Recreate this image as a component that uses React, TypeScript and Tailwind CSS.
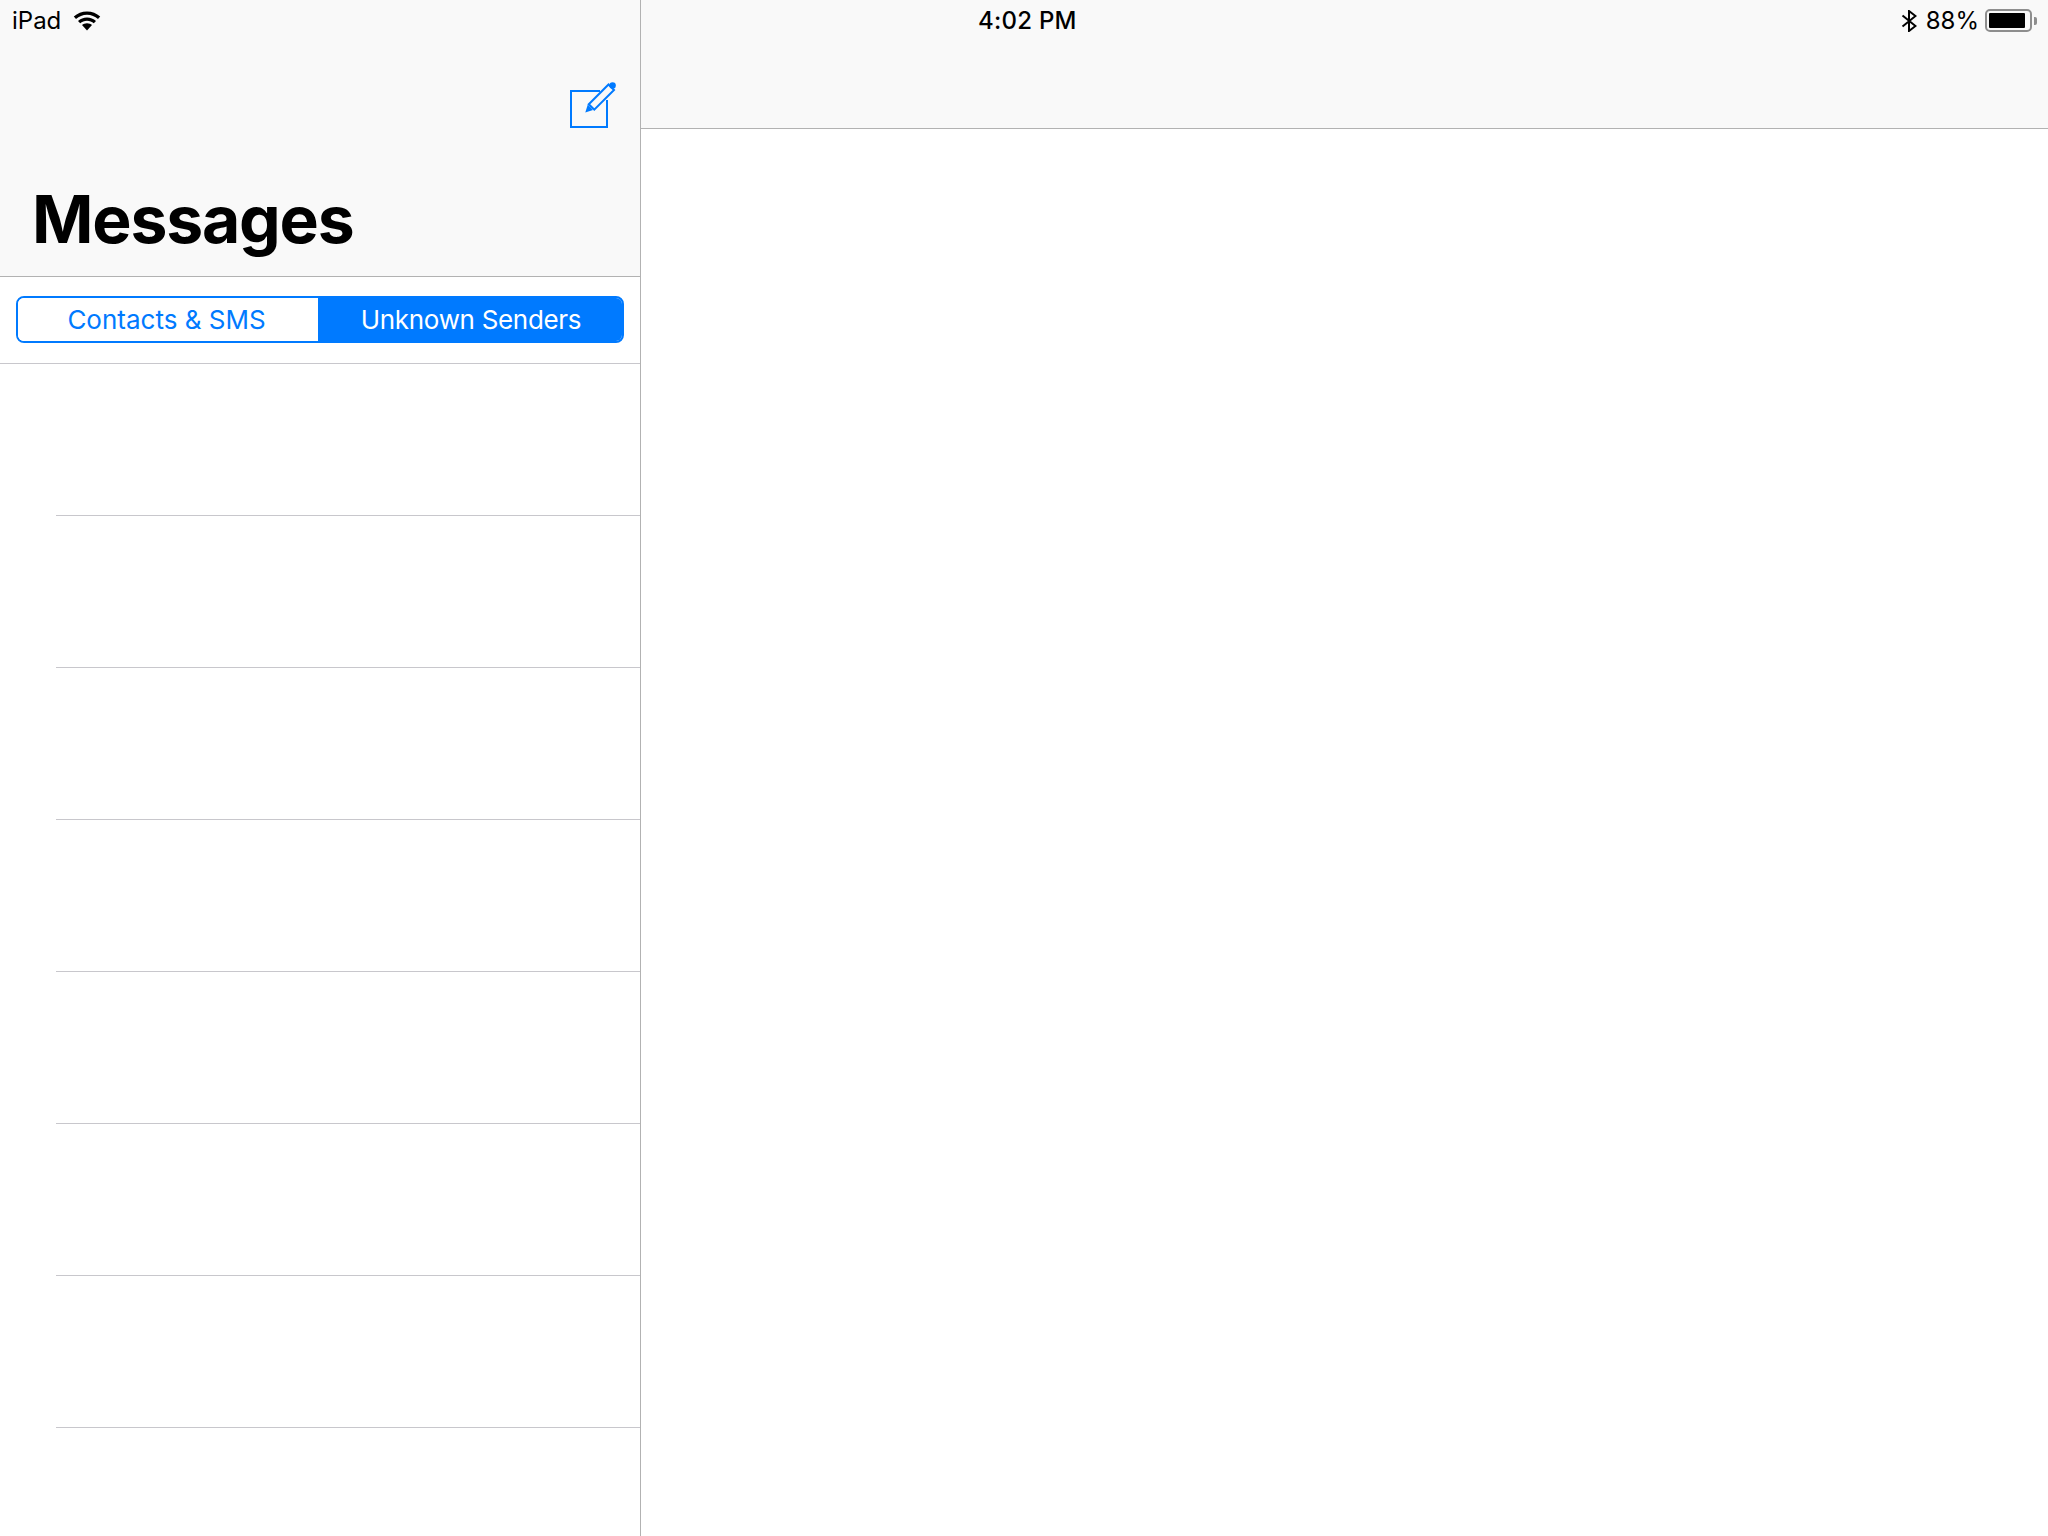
import React from 'react';

const ROWS = [0, 1, 2, 3, 4, 5, 6];

const WifiIcon = () => (
    <svg width="28" height="20" viewBox="0 0 28 20" className="block">
        <path d="M14 0.5C8.9 0.5 4.3 2.4 0.8 5.6L3 8C6 5.3 9.8 3.7 14 3.7S22 5.3 25 8L27.2 5.6C23.7 2.4 19.1 0.5 14 0.5Z" fill="#000" />
        <path d="M14 6.4C10.5 6.4 7.4 7.7 5 9.9L7.2 12.3C9 10.7 11.4 9.7 14 9.7S19 10.7 20.8 12.3L23 9.9C20.6 7.7 17.5 6.4 14 6.4Z" fill="#000" />
        <path d="M14 12.2C12 12.2 10.3 12.9 9 14.1L14 19.5L19 14.1C17.7 12.9 16 12.2 14 12.2Z" fill="#000" />
    </svg>
);

const BluetoothIcon = () => (
    <svg width="16" height="22" viewBox="0 0 16 22" className="block">
        <path d="M1.5 5.5L14.5 16L8 21V1L14.5 6L1.5 16.5" fill="none" stroke="#000" strokeWidth="2" />
    </svg>
);

const ComposeIcon = () => (
    <svg width="48" height="48" viewBox="0 0 48 48" className="block">
        <path d="M32 10H3V46H39V19" fill="none" stroke="#007aff" strokeWidth="2" />
        <path d="M20.8 23.2L40.5 3.5L46 9L26.3 28.7Z" fill="none" stroke="#007aff" strokeWidth="2" />
        <path d="M17.3 31.5L19.8 23.5L25 29Z" fill="#007aff" />
        <circle cx="44.6" cy="4.4" r="3.2" fill="#007aff" />
    </svg>
);

export default function App() {
    return (
        <div className="flex w-[2048px] h-[1536px] overflow-hidden bg-white text-black font-['Inter','Liberation_Sans',sans-serif]">
            {/* master column */}
            <div className="w-[641px] h-full shrink-0 flex flex-col border-r border-[#b2b2b2]">
                <div className="h-[277px] shrink-0 bg-[#f9f9f9] border-b border-[#b2b2b2] flex flex-col">
                    <div className="h-[41px] shrink-0 flex items-center pl-3 gap-[12px]">
                        <span className="text-[24px] leading-none">iPad</span>
                        <WifiIcon />
                    </div>
                    <div className="flex justify-end pr-6 pt-[40px]">
                        <ComposeIcon />
                    </div>
                    <h1 className="pl-8 mt-[50px] text-[66px] leading-[80px] font-bold tracking-[-0.018em]">Messages</h1>
                </div>
                <div className="h-[87px] shrink-0 border-b border-[#c8c7cc] px-4 flex items-start pt-[19px]">
                    <div className="flex w-full h-[47px] rounded-lg border-2 border-[#007aff] overflow-hidden text-[26px]">
                        <div className="w-[300px] pr-[3px] flex items-center justify-center bg-white text-[#007aff]">Contacts &amp; SMS</div>
                        <div className="flex-1 pl-[2px] flex items-center justify-center bg-[#007aff] text-white tracking-[-0.012em]">Unknown Senders</div>
                    </div>
                </div>
                <div className="flex-1 overflow-hidden">
                    {ROWS.map((row) => (
                        <div key={row} className="h-[152px] ml-14 border-b border-[#c8c7cc]"></div>
                    ))}
                </div>
            </div>

            {/* detail column */}
            <div className="flex-1 h-full flex flex-col">
                <div className="h-[129px] shrink-0 bg-[#f9f9f9] border-b border-[#b2b2b2]">
                    <div className="h-[41px] flex items-center justify-between pl-[337px] pr-[11px]">
                        <span className="text-[24px] leading-none font-medium tracking-[0.01em]">4:02 PM</span>
                        <div className="flex items-center">
                            <BluetoothIcon />
                            <span className="text-[24px] leading-none ml-[9px]">88%</span>
                            <div className="ml-[6px] w-[47px] h-[23px] rounded-[5px] border-2 border-[#8e8e8e] p-[2px]">
                                <div className="w-[36px] h-full rounded-[1px] bg-black"></div>
                            </div>
                            <div className="ml-[2px] w-[3px] h-[8px] rounded-r-[2px] bg-[#8e8e8e]"></div>
                        </div>
                    </div>
                </div>
                <div className="flex-1 bg-white"></div>
            </div>
        </div>
    );
}
